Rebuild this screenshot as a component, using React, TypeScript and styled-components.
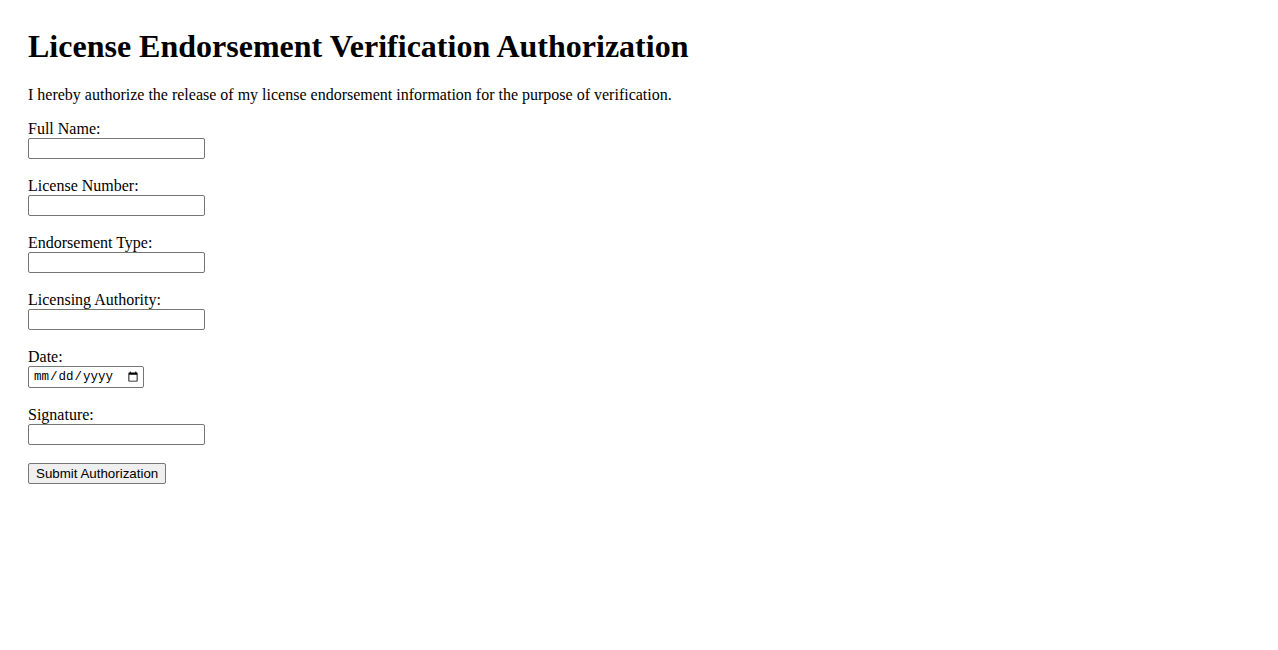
import React, { useState } from 'react';
import styled, { createGlobalStyle } from 'styled-components';

const GlobalStyle = createGlobalStyle`
  body {
    margin: 8px;
    background: #fff;
    color: #000;
    font-family: "Liberation Serif", "Times New Roman", serif;
    font-size: 16px;
  }
`;

const Page = styled.div`
  padding: 20px;
`;

const Title = styled.h1`
  font-size: 32px;
  font-weight: bold;
  margin: 0 0 21px;
`;

const Intro = styled.p`
  margin: 0 0 16px;
`;

const Field = styled.div`
  margin-bottom: 18px;
`;

const Label = styled.label`
  display: block;
`;

const Input = styled.input`
  font-family: "Liberation Sans", Arial, sans-serif;
  font-size: 13.333px;
  width: 171px;
  padding: 1px 2px;
  border: 1px solid #767676;
  border-radius: 2px;
  box-sizing: content-box;
  height: 17px;
`;

const DateInput = styled(Input)`
  width: 108px;
  height: 18px;
  padding: 1px 2px 1px 4px;
  font-family: "Liberation Mono", "Courier New", monospace;
  font-size: 12.5px;
`;

const SubmitButton = styled.button`
  font-family: "Liberation Sans", Arial, sans-serif;
  font-size: 13.333px;
  padding: 1px 7px;
  border: 1px solid #767676;
  border-radius: 2px;
  background: #efefef;
  color: #000;
  height: 21px;
`;

const fields = [
  { id: 'fullName', label: 'Full Name:' },
  { id: 'licenseNumber', label: 'License Number:' },
  { id: 'endorsementType', label: 'Endorsement Type:' },
  { id: 'licensingAuthority', label: 'Licensing Authority:' },
];

const App: React.FC = () => {
  const [values, setValues] = useState<Record<string, string>>({});

  const handleChange = (e: React.ChangeEvent<HTMLInputElement>) => {
    setValues({ ...values, [e.target.name]: e.target.value });
  };

  const handleSubmit = (e: React.FormEvent) => {
    e.preventDefault();
  };

  return (
    <Page>
      <GlobalStyle />
      <Title>License Endorsement Verification Authorization</Title>
      <Intro>I hereby authorize the release of my license endorsement information for the purpose of verification.</Intro>
      <form onSubmit={handleSubmit}>
        {fields.map((f) => (
          <Field key={f.id}>
            <Label htmlFor={f.id}>{f.label}</Label>
            <Input type="text" id={f.id} name={f.id} value={values[f.id] || ''} onChange={handleChange} />
          </Field>
        ))}
        <Field>
          <Label htmlFor="date">Date:</Label>
          <DateInput type="date" id="date" name="date" value={values.date || ''} onChange={handleChange} />
        </Field>
        <Field>
          <Label htmlFor="signature">Signature:</Label>
          <Input type="text" id="signature" name="signature" value={values.signature || ''} onChange={handleChange} />
        </Field>
        <SubmitButton type="submit">Submit Authorization</SubmitButton>
      </form>
    </Page>
  );
};

export default App;
